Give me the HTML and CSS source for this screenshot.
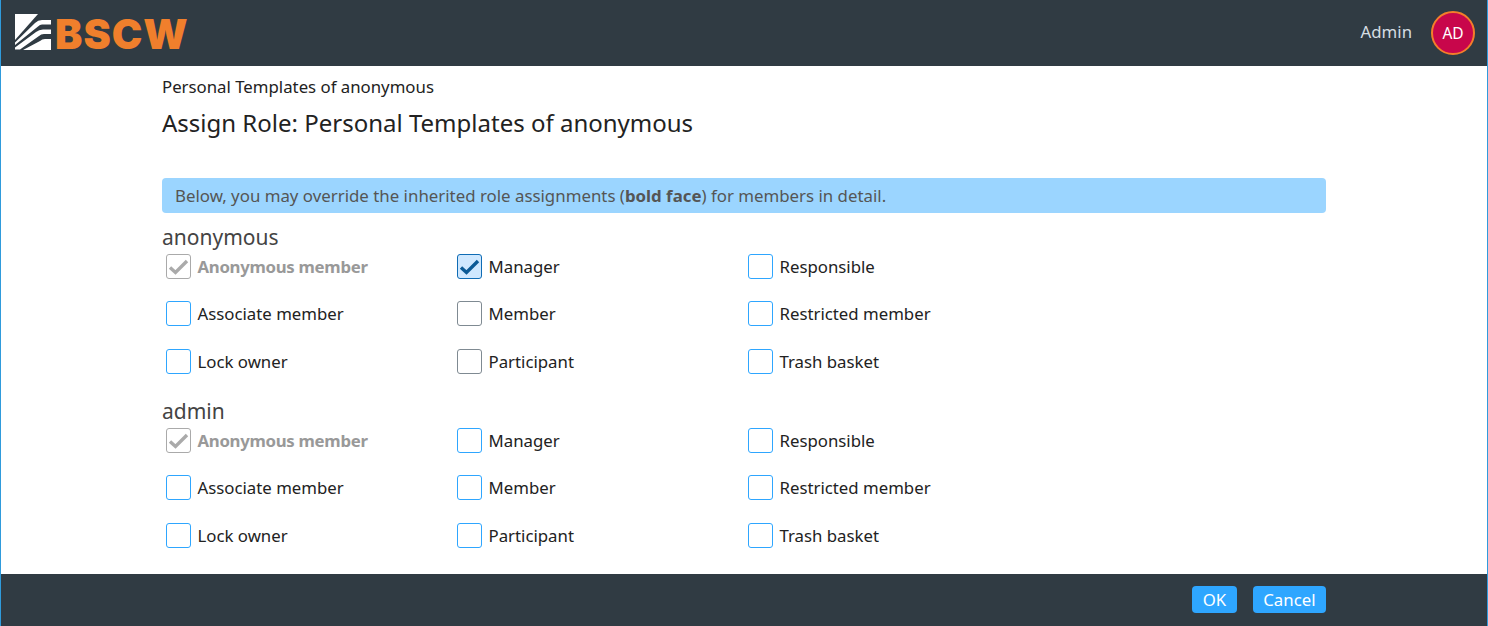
FILE: index.html
```html
<!DOCTYPE html>
<html lang="en">
<head>
<meta charset="utf-8">
<title>Assign Role</title>
<link rel="stylesheet" href="styles.css">
</head>
<body>
<div class="app">
  <header class="topbar">
    <div class="logo">
      <svg class="logo-mark" width="36" height="36" viewBox="0 0 36 36">
        <path fill="#fff" d="M0 0H23L0 26Z"/>
        <path fill="#fff" d="M36 6V10.5H27Q25 10.5 23 12.5L0 31V28.5L20 9Q23 6 27 6Z"/>
        <path fill="#fff" d="M36 15.5V20H29Q26 20 24 22L5 35.5H0V33.5L21 18Q24 15.5 28 15.5Z"/>
        <path fill="#fff" d="M36 25V36H8L25 27Q27 25 30 25Z"/>
      </svg>
      <span class="logo-text">BSCW</span>
    </div>
    <div class="user">
      <span class="user-name">Admin</span>
      <span class="avatar">AD</span>
    </div>
  </header>
  <main class="content">
    <div class="crumb">Personal Templates of anonymous</div>
    <h1 class="title">Assign Role: Personal Templates of anonymous</h1>
    <div class="notice">Below, you may override the inherited role assignments (<b>bold face</b>) for members in detail.</div>

    <section class="member">
      <h2 class="member-name">anonymous</h2>
      <div class="roles">
        <label class="role inherited"><span class="box"><svg viewBox="0 0 23 23"><path d="M3 12.5l5.5 5L20 6"/></svg></span>Anonymous member</label>
        <label class="role"><span class="box checked"><svg viewBox="0 0 23 23"><path d="M3 12.5l5.5 5L20 6"/></svg></span>Manager</label>
        <label class="role"><span class="box"></span>Responsible</label>
        <label class="role"><span class="box"></span>Associate member</label>
        <label class="role"><span class="box muted"></span>Member</label>
        <label class="role"><span class="box"></span>Restricted member</label>
        <label class="role"><span class="box"></span>Lock owner</label>
        <label class="role"><span class="box muted"></span>Participant</label>
        <label class="role"><span class="box"></span>Trash basket</label>
      </div>
    </section>

    <section class="member">
      <h2 class="member-name">admin</h2>
      <div class="roles">
        <label class="role inherited"><span class="box"><svg viewBox="0 0 23 23"><path d="M3 12.5l5.5 5L20 6"/></svg></span>Anonymous member</label>
        <label class="role"><span class="box"></span>Manager</label>
        <label class="role"><span class="box"></span>Responsible</label>
        <label class="role"><span class="box"></span>Associate member</label>
        <label class="role"><span class="box"></span>Member</label>
        <label class="role"><span class="box"></span>Restricted member</label>
        <label class="role"><span class="box"></span>Lock owner</label>
        <label class="role"><span class="box"></span>Participant</label>
        <label class="role"><span class="box"></span>Trash basket</label>
      </div>
    </section>
  </main>
  <footer class="bottombar">
    <button class="btn">OK</button>
    <button class="btn">Cancel</button>
  </footer>
</div>
</body>
</html>
```
FILE: styles.css
```css
* { box-sizing: border-box; }
html, body { margin: 0; height: 100%; }
body {
  font-family: "Noto Sans", "Open Sans", sans-serif;
  color: #222;
  background: #fff;
  overflow: hidden;
}
.app {
  height: 626px;
  display: flex;
  flex-direction: column;
  border-left: 1px solid #2f9bdc;
  border-right: 1px solid #2f9bdc;
}
.topbar {
  height: 66px;
  flex: none;
  background: #303b43;
  display: flex;
  align-items: center;
  justify-content: space-between;
  padding: 0 12px 0 14px;
}
.logo { display: flex; align-items: center; gap: 4px; }
.logo-mark { display: block; margin-top: -2px; }
.logo-text {
  font-family: Inter, sans-serif;
  font-weight: 900;
  font-size: 41px;
  line-height: 36px;
  color: #f07f2c;
  letter-spacing: 1px;
  margin-top: 1px;
}
.user { display: flex; align-items: center; gap: 19px; }
.user-name { font-size: 16.8px; color: #d5dde2; margin-top: -3px; }
.avatar {
  width: 44px;
  height: 44px;
  border-radius: 50%;
  background: #c8064b;
  border: 2px solid #f47e2a;
  color: #fff;
  font-size: 15.5px;
  display: flex;
  align-items: center;
  justify-content: center;
}
.content {
  flex: 1;
  width: 1164px;
  margin-left: 161px;
  padding-top: 9px;
}
.crumb { font-size: 16.8px; line-height: 24px; color: #222; }
.title {
  font-size: 24px;
  font-weight: 400;
  line-height: 32px;
  margin: 8px 0 39px;
  color: #222;
}
.notice {
  height: 35px;
  background: #9bd5ff;
  border-radius: 4px;
  padding: 0 13px;
  font-size: 16.85px;
  line-height: 35px;
  color: #555;
}
.notice b { font-weight: 700; }
.member-name {
  font-size: 21px;
  font-weight: 400;
  line-height: 24px;
  margin: 11.5px 0 2px;
  color: #444;
}
.member + .member .member-name { margin-top: 5.5px; }
.roles {
  display: grid;
  grid-template-columns: repeat(3, 291px);
  grid-auto-rows: 47.5px;
  padding-left: 4px;
}
.role {
  display: flex;
  align-items: center;
  gap: 6.5px;
  font-size: 16.8px;
  height: 25px;
  color: #222;
  margin-top: 3px;
}
.box {
  width: 25px;
  height: 25px;
  flex: none;
  border: 1px solid #2ea6ff;
  border-radius: 3px;
  background: #fff;
}
.box.muted { border-color: #7f8a92; }
.box svg { display: block; width: 23px; height: 23px; fill: none; stroke-width: 3.4; }
.box.checked { background: #cfe8ff; border-color: #0f6cb5; }
.box.checked svg { stroke: #0b5a96; }
.role.inherited { color: #999; font-weight: 700; font-size: 16.8px; letter-spacing: -0.3px; }
.role.inherited .box { border-color: #aaa; }
.role.inherited svg { stroke: #aaa; }
.bottombar {
  height: 52px;
  flex: none;
  background: #303b43;
  display: flex;
  align-items: flex-start;
  justify-content: flex-end;
  gap: 16px;
  padding: 12px 161px 0 0;
}
.btn {
  height: 27px;
  border: 0;
  border-radius: 4px;
  background: #2ea6ff;
  color: #fff;
  font-family: inherit;
  font-size: 16.8px;
  padding: 0 10.5px;
  line-height: 27px;
}
```
